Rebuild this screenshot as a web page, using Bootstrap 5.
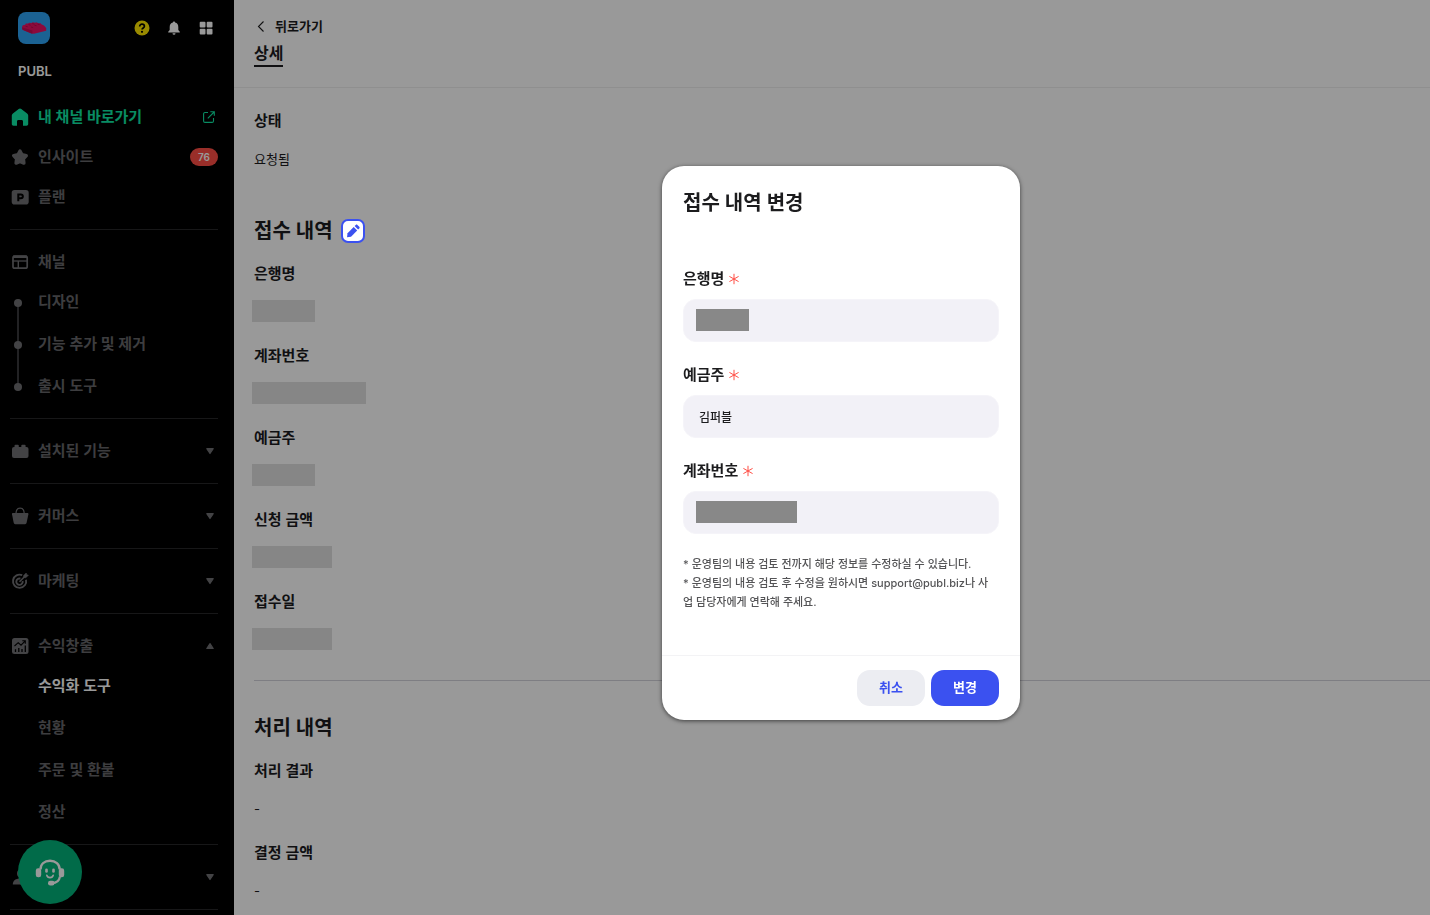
<!DOCTYPE html>
<html lang="ko">
<head>
<meta charset="utf-8">
<meta name="viewport" content="width=device-width, initial-scale=1">
<title>PUBL - 상세</title>
<link href="https://cdn.jsdelivr.net/npm/bootstrap@5.3.0/dist/css/bootstrap.min.css" rel="stylesheet">
<style>
  :root { --ink: #1c1c1e; --muted: #66666a; --brand: #3b51f0; --green: #0fe9a5; }
  body { font-family: Inter, "Noto Sans CJK KR", sans-serif; font-size: 15px; line-height: 24px; color: var(--ink); background: #fff; }
  svg { display: block; flex: none; }
  a { color: inherit; text-decoration: none; }

  /* sidebar */
  .side { width: 234px; background: #000; color: var(--muted); font-weight: 600; padding: 12px 16px 0 10px; }
  .side-top { padding: 0 4px 0 8px; }
  .side-name { padding-left: 8px; font-size: 13px; margin: 15px 0 14px; color: #fff; }
  .side-group { border-bottom: 1px solid #272729; padding: 12px 0; }
  .side-group.first { padding-top: 0; }
  .side-group.open { padding-bottom: 10px; }
  .side-row { height: 40px; gap: 8px; padding: 0; width: 100%; color: inherit; font-weight: inherit; background: none; border: 0; text-align: left; }
  .side-row .tail { margin-left: auto; margin-right: 3px; }
  .side-row .side-count { margin-left: auto; }
  .side-sub { height: 42px; padding: 0 0 2px 28px; position: relative; }
  .side-steps .side-sub::before { content: ""; position: absolute; z-index: 1; left: 4px; top: 17px; width: 8px; height: 8px; border-radius: 50%; background: #707074; }
  .side-steps .side-sub:not(:last-child)::after { content: ""; position: absolute; left: 7px; top: 22px; width: 2px; height: 42px; background: #3a3a3c; }
  .side-count { background: #ff4e45; color: #fff; font-size: 10px; line-height: 18px; width: 28px; text-align: center; border-radius: 9px; }
  .text-green { color: var(--green); }
  .help-fab { left: 18px; bottom: 11px; width: 64px; height: 64px; background: #03b27b; border: 0; z-index: 1030; }

  /* detail page */
  .page-head { height: 88px; padding: 14px 20px 0; border-bottom: 1px solid #eee; }
  .back-link { font-size: 13px; font-weight: 600; gap: 10px; padding-left: 3px; }
  .tab-current { font-size: 16px; font-weight: 600; border-bottom: 2px solid var(--ink); margin-top: 3px; line-height: 24px; }
  .page-body { padding: 21px 0 0 20px; }
  .page-body h2, .modal-title { font-size: 20px; line-height: 32px; font-weight: 600; margin: 0; }
  .request-head { gap: 8px; margin: 44px 0 15px; }
  .page-body h2.result-head { margin-bottom: 15px; }
  dl, dd { margin: 0; }
  dt { font-weight: 600; }
  .entry { margin-bottom: 20px; }
  .entry:last-child { margin-bottom: 0; }
  .entry dd { font-size: 13px; height: 24px; margin-top: 14px; }
  .masked { display: block; height: 22px; background: #e0e0e0; margin-left: -2px; }
  .w-short { width: 63px; } .w-mid { width: 80px; } .w-long { width: 114px; }
  .edit-btn { width: 24px; height: 24px; border: 2px solid var(--brand); border-radius: 7px; background: #fff; z-index: 1051; color: var(--brand); }
  .rule { border-top: 1px solid #d3d3db; margin: 28px 0 31px; }

  /* dialog */
  .modal-backdrop { --bs-backdrop-opacity: .4; }
  .change-modal { padding: 0 0 29px 252px; }
  .change-modal .modal-dialog { max-width: 358px; min-height: 100%; margin: 0 auto; }
  .change-modal .modal-content { border: 0; border-radius: 22px; box-shadow: 0 1px 4px rgba(0,0,0,.6); color: var(--ink); }
  .change-modal .modal-header { padding: 21px 21px 0; border: 0; }
  .change-modal .modal-body { padding: 48px 21px 43px; }
  .change-modal .modal-footer { padding: 14px 21px; gap: 6px; border-top: 1px solid #f3f3f5; }
  .change-modal .modal-footer > * { margin: 0; }
  .form-label { gap: 5px; font-weight: 600; margin-bottom: 8px; }
  .change-field { margin-bottom: 21px; }
  .change-field .form-control { height: 43px; border: 1px solid #f5f4f9; border-radius: 13px; background: #f2f1f7; font-size: 12px; font-weight: 500; padding: 0 15px; color: var(--ink); }
  .change-field .masked { position: absolute; left: 13px; top: 10px; margin: 0; background: #888; }
  .m-short { width: 53px; } .m-long { width: 101px; }
  .note { font-size: 11px; line-height: 19px; color: #545456; font-weight: 500; margin: 0; padding-right: 4px; }
  .act { width: 68px; height: 36px; border-radius: 13px; font-size: 13px; font-weight: 600; padding: 0; border: 0; }
  .act-cancel { background: #ecedf2; color: var(--brand); }
  .act-save { background: var(--brand); color: #fff; }
</style>
</head>
<body class="vh-100 overflow-hidden">
<div class="d-flex h-100">
  <nav class="side flex-shrink-0 overflow-hidden" aria-label="메뉴">
    <div class="side-top d-flex align-items-center">
      <a href="#" aria-label="PUBL">
        <svg width="32" height="32" viewBox="0 0 32 32"><rect width="32" height="32" rx="8" fill="#2ea4f6"/><path d="M4 15l.8-1.800 2.400-.4.6-1.200 2.400-.1.8-.8 2.600.3 1-.7 2.400.5 1.400-.5 2 .9 2.200.1.800.900 2.600 1.200 2.200 2.600v2.800L16 21.800l-2.500-.3L4.500 17.800z" fill="#ea1265"/><path d="M4 15.200l10.500 3.300v3.100l-1-.1-9-3.700z" fill="#c90d55"/><path d="M7.500 14.200l2.200.6m.8-2.200l2.200.6m1.600-1.600l2.200.6m-3.500 2.800l2.200.6m1.200-2.400l2.200.6m1-1.800l2 .6" stroke="#b80b4c" stroke-width=".9"/></svg>
      </a>
      <div class="d-flex align-items-center ms-auto gap-3">
        <a href="#" aria-label="도움말"><svg width="16" height="16" viewBox="0 0 16 16"><circle cx="8" cy="8" r="7.500" fill="#ffe600"/><path d="M5.700 6.500C5.700 5 6.700 4.200 8 4.200s2.400.8 2.400 2.100c0 1.600-2.300 1.700-2.300 3.200" fill="none" stroke="#000" stroke-width="1.700"/><circle cx="8" cy="11.800" r="1.100"/></svg></a>
        <a href="#" aria-label="알림"><svg width="16" height="16" viewBox="0 0 16 16" fill="#fff"><path d="M8 1.500c.7 0 1.100.5 1.100 1.100C11.200 3.100 12.300 4.800 12.300 7v3l1.500 1.700v.8H2.200v-.8L3.700 10V7c0-2.200 1.100-3.900 3.200-4.400C6.900 2 7.300 1.500 8 1.500zM6.500 13.200h3a1.500 1.500 0 0 1-3 0z"/></svg></a>
        <a href="#" aria-label="앱"><svg width="16" height="16" viewBox="0 0 16 16" fill="#fff"><rect x="1.700" y="1.700" width="5.800" height="5.800" rx="1"/><rect x="8.700" y="1.700" width="5.800" height="5.800" rx="1"/><rect x="1.700" y="8.700" width="5.800" height="5.800" rx="1"/><rect x="8.700" y="8.700" width="5.800" height="5.800" rx="1"/></svg></a>
      </div>
    </div>
    <div class="side-name">PUBL</div>

    <div class="side-group first">
      <a href="#" class="side-row d-flex align-items-center text-green">
        <svg width="20" height="20" viewBox="0 0 20 20"><path d="M10 1.500c.5 0 .9.200 1.300.5l5.800 4.600c.7.500 1.100 1.200 1.100 2V17c0 1-.7 1.700-1.700 1.700H13v-4.200c0-1-.6-1.500-1.500-1.500h-3c-.9 0-1.500.5-1.500 1.500v4.200H3.500c-1 0-1.700-.7-1.700-1.700V8.600c0-.8.400-1.500 1.100-2L8.700 2c.4-.3.8-.5 1.300-.5z" fill="currentColor"/></svg>
        <span>내 채널 바로가기</span>
        <svg class="tail" width="12" height="12" viewBox="0 0 12 12" fill="none" stroke="currentColor" stroke-width="1.100"><path d="M5 1.500H2A1.400 1.400 0 0 0 .6 2.900V10A1.400 1.400 0 0 0 2 11.400h7.100A1.400 1.400 0 0 0 10.500 10V7M7.300.8h4v4M11.100 1L4.800 7.300"/></svg>
      </a>
      <a href="#" class="side-row d-flex align-items-center">
        <svg width="20" height="20" viewBox="0 0 20 20"><path d="M10 4l2 3.700 4.300.9-2.900 3.200.5 4.300L10 14.400l-3.900 1.700.5-4.300-2.900-3.200L8 7.700z" fill="#707074" stroke="#707074" stroke-width="3.400" stroke-linejoin="round"/></svg>
        <span>인사이트</span><span class="side-count">76</span>
      </a>
      <a href="#" class="side-row d-flex align-items-center">
        <svg width="20" height="20" viewBox="0 0 20 20"><rect x="1.700" y="3" width="17" height="14.500" rx="2.800" fill="#707074"/><path d="M8.300 14.200V7.400h2.600a1.800 1.800 0 0 1 0 3.900H8.300" fill="none" stroke="#000" stroke-width="2"/></svg>
        <span>플랜</span>
      </a>
    </div>

    <div class="side-group open">
      <a href="#" class="side-row d-flex align-items-center">
        <svg width="20" height="20" viewBox="0 0 20 20"><rect x="3" y="4" width="14.200" height="12.200" rx="1.800" fill="none" stroke="#707074" stroke-width="1.700"/><path d="M3 3.500h14v2.500H3z" fill="#707074"/><path d="M2.500 9h15" stroke="#707074" stroke-width="1.300"/><path d="M8.300 9v7" stroke="#707074" stroke-width="1.400"/></svg>
        <span>채널</span>
      </a>
      <div class="side-steps">
        <a href="#" class="side-sub d-flex align-items-center">디자인</a>
        <a href="#" class="side-sub d-flex align-items-center">기능 추가 및 제거</a>
        <a href="#" class="side-sub d-flex align-items-center">출시 도구</a>
      </div>
    </div>

    <div class="side-group">
      <button type="button" class="side-row d-flex align-items-center">
        <svg width="20" height="20" viewBox="0 0 20 20" fill="#707074"><rect x="2" y="6" width="16.500" height="11" rx="2"/><rect x="4.500" y="3.800" width="4.300" height="4" rx="1"/><rect x="11.300" y="3.800" width="4.300" height="4" rx="1"/></svg>
        <span>설치된 기능</span>
        <svg class="tail" width="10" height="8" viewBox="0 0 10 8"><path d="M1.800 1.700h6.400L5 6.500z" fill="#707074" stroke="#707074" stroke-width="1.200" stroke-linejoin="round"/></svg>
      </button>
    </div>
    <div class="side-group">
      <button type="button" class="side-row d-flex align-items-center">
        <svg width="20" height="20" viewBox="0 0 20 20"><path d="M3 7h14.400c.7 0 1.100.5 1 1.200l-1.800 8.600c-.2.900-.7 1.400-1.600 1.400H5.300c-.9 0-1.400-.5-1.600-1.400L2 8.200C1.900 7.500 2.300 7 3 7z" fill="#707074"/><path d="M6 8c0-3.400 1.600-5.800 4.100-5.800s4.100 2.400 4.100 5.800" fill="none" stroke="#707074" stroke-width="1.200"/></svg>
        <span>커머스</span>
        <svg class="tail" width="10" height="8" viewBox="0 0 10 8"><path d="M1.800 1.700h6.400L5 6.500z" fill="#707074" stroke="#707074" stroke-width="1.200" stroke-linejoin="round"/></svg>
      </button>
    </div>
    <div class="side-group">
      <button type="button" class="side-row d-flex align-items-center">
        <svg width="20" height="20" viewBox="0 0 20 20" fill="none" stroke="#707074"><path d="M12.200 4.200a6.600 6.600 0 1 0 3.800 4.500" stroke-width="1.900"/><path d="M10.400 7.600a3.200 3.200 0 1 0 2.200 2.300" stroke-width="1.900"/><path d="M9.500 10.700l5-5" stroke-width="1.600"/><path d="M13.600 4.600l2.600-2.600.5 1.700 1.700.5-2.600 2.600-2-.3z" fill="#707074" stroke-width=".6"/></svg>
        <span>마케팅</span>
        <svg class="tail" width="10" height="8" viewBox="0 0 10 8"><path d="M1.800 1.700h6.400L5 6.500z" fill="#707074" stroke="#707074" stroke-width="1.200" stroke-linejoin="round"/></svg>
      </button>
    </div>
    <div class="side-group open">
      <button type="button" class="side-row d-flex align-items-center">
        <svg width="20" height="20" viewBox="0 0 20 20" fill="none"><rect x="2" y="2" width="16.500" height="16" rx="2.500" fill="#707074"/><path d="M5.500 16v-2.700M8.800 16v-4M12 16v-3M15.300 16V9.500" stroke="#000" stroke-width="1.300"/><path d="M4.500 10l3.700-3.300 2.800 2.500 3.800-3.900M12.300 4.800h3v3" stroke="#000" stroke-width="1.100"/></svg>
        <span>수익창출</span>
        <svg class="tail" width="10" height="8" viewBox="0 0 10 8"><path d="M1.800 6.500h6.400L5 1.700z" fill="#707074" stroke="#707074" stroke-width="1.200" stroke-linejoin="round"/></svg>
      </button>
      <a href="#" class="side-sub d-flex align-items-center text-white">수익화 도구</a>
      <a href="#" class="side-sub d-flex align-items-center">현황</a>
      <a href="#" class="side-sub d-flex align-items-center">주문 및 환불</a>
      <a href="#" class="side-sub d-flex align-items-center">정산</a>
    </div>
    <div class="side-group">
      <button type="button" class="side-row d-flex align-items-center" aria-label="사용자">
        <svg width="20" height="20" viewBox="0 0 20 20" fill="#707074"><circle cx="11" cy="6.500" r="4"/><path d="M2.800 17.500c0-4 3-6 7.200-6s7.200 2 7.200 6z"/></svg>
        <svg class="tail" width="10" height="8" viewBox="0 0 10 8"><path d="M1.800 1.700h6.400L5 6.500z" fill="#707074" stroke="#707074" stroke-width="1.200" stroke-linejoin="round"/></svg>
      </button>
    </div>
  </nav>

  <main class="flex-grow-1 overflow-hidden">
    <header class="page-head d-flex flex-column align-items-start">
      <a href="#" class="back-link d-flex align-items-center">
        <svg width="8" height="12" viewBox="0 0 8 12" fill="none" stroke="#1c1c1e" stroke-width="1.100"><path d="M6.500 1.500L1.500 6.500l5 5"/></svg>
        뒤로가기
      </a>
      <a href="#" class="tab-current">상세</a>
    </header>
    <div class="page-body">
      <dl><div class="entry"><dt>상태</dt><dd>요청됨</dd></div></dl>
      <div class="request-head d-flex align-items-center">
        <h2>접수 내역</h2>
        <button type="button" class="edit-btn position-relative d-flex align-items-center justify-content-center p-0" aria-label="접수 내역 변경">
          <svg width="16" height="16" viewBox="0 0 16 16" fill="currentColor"><path d="M2 14.200l.5-4L8.700 4 12.200 7.500l-6.200 6.200z"/><path d="M9.600 3.100l1.200-1.200c.5-.5 1.100-.5 1.600 0l1.900 1.900c.5.500.5 1.100 0 1.600l-1.200 1.200z"/></svg>
        </button>
      </div>
      <dl>
        <div class="entry"><dt>은행명</dt><dd><span class="masked w-short"></span></dd></div>
        <div class="entry"><dt>계좌번호</dt><dd><span class="masked w-long"></span></dd></div>
        <div class="entry"><dt>예금주</dt><dd><span class="masked w-short"></span></dd></div>
        <div class="entry"><dt>신청 금액</dt><dd><span class="masked w-mid"></span></dd></div>
        <div class="entry"><dt>접수일</dt><dd><span class="masked w-mid"></span></dd></div>
      </dl>
      <div class="rule"></div>
      <h2 class="result-head">처리 내역</h2>
      <dl>
        <div class="entry"><dt>처리 결과</dt><dd>-</dd></div>
        <div class="entry"><dt>결정 금액</dt><dd>-</dd></div>
      </dl>
    </div>
  </main>
</div>

<button type="button" class="help-fab position-fixed rounded-circle d-flex align-items-center justify-content-center" aria-label="상담">
  <svg width="32" height="32" viewBox="0 0 32 32" fill="none" stroke="#fff"><path d="M6.500 13.500C6.500 8 10.500 4.800 16 4.800s9.700 3.200 9.700 8.700" stroke-width="2.400"/><path d="M26 20.500c-.7 4-3.500 6.500-8 6.700" stroke-width="2.200"/><rect x="1.800" y="12.300" width="5.400" height="9" rx="2.400" fill="#fff" stroke="none"/><rect x="24.800" y="12.300" width="5.400" height="9" rx="2.400" fill="#fff" stroke="none"/><rect x="14" y="24.800" width="6.500" height="4.600" rx="2.200" fill="#fff" stroke="none"/><rect x="11.200" y="12.500" width="2.600" height="4.200" rx="1.300" fill="#fff" stroke="none"/><rect x="18.200" y="12.500" width="2.600" height="4.200" rx="1.300" fill="#fff" stroke="none"/><path d="M12.800 19.200c.4 1.600 1.600 2.400 3.200 2.400s2.800-.8 3.200-2.400" stroke-width="1.600" stroke-linecap="round"/></svg>
</button>

<div class="modal-backdrop show"></div>
<div class="modal change-modal d-block overflow-hidden" role="dialog" aria-modal="true" aria-labelledby="change-title">
  <div class="modal-dialog modal-dialog-centered">
    <form class="modal-content">
      <div class="modal-header"><h1 class="modal-title" id="change-title">접수 내역 변경</h1></div>
      <div class="modal-body">
        <div class="change-field">
          <label class="form-label d-flex align-items-center" for="bank">은행명
            <svg width="10" height="12" viewBox="0 0 10 12" stroke="#ff4e45" stroke-width="1"><path d="M5 .8v10.400M.4 3.400l9.200 5.200M9.600 3.400L.4 8.600"/></svg></label>
          <div class="position-relative"><input class="form-control" id="bank" type="text"><span class="masked m-short"></span></div>
        </div>
        <div class="change-field">
          <label class="form-label d-flex align-items-center" for="holder">예금주
            <svg width="10" height="12" viewBox="0 0 10 12" stroke="#ff4e45" stroke-width="1"><path d="M5 .8v10.400M.4 3.400l9.200 5.200M9.600 3.400L.4 8.600"/></svg></label>
          <input class="form-control" id="holder" type="text" value="김퍼블">
        </div>
        <div class="change-field">
          <label class="form-label d-flex align-items-center" for="account">계좌번호
            <svg width="10" height="12" viewBox="0 0 10 12" stroke="#ff4e45" stroke-width="1"><path d="M5 .8v10.400M.4 3.400l9.200 5.200M9.600 3.400L.4 8.600"/></svg></label>
          <div class="position-relative"><input class="form-control" id="account" type="text"><span class="masked m-long"></span></div>
        </div>
        <p class="note">* 운영팀의 내용 검토 전까지 해당 정보를 수정하실 수 있습니다.<br>* 운영팀의 내용 검토 후 수정을 원하시면 support@publ.biz나 사업 담당자에게 연락해 주세요.</p>
      </div>
      <div class="modal-footer">
        <button type="button" class="btn act act-cancel">취소</button>
        <button type="submit" class="btn act act-save">변경</button>
      </div>
    </form>
  </div>
</div>
<script src="https://cdn.jsdelivr.net/npm/bootstrap@5.3.0/dist/js/bootstrap.bundle.min.js"></script>
</body>
</html>
